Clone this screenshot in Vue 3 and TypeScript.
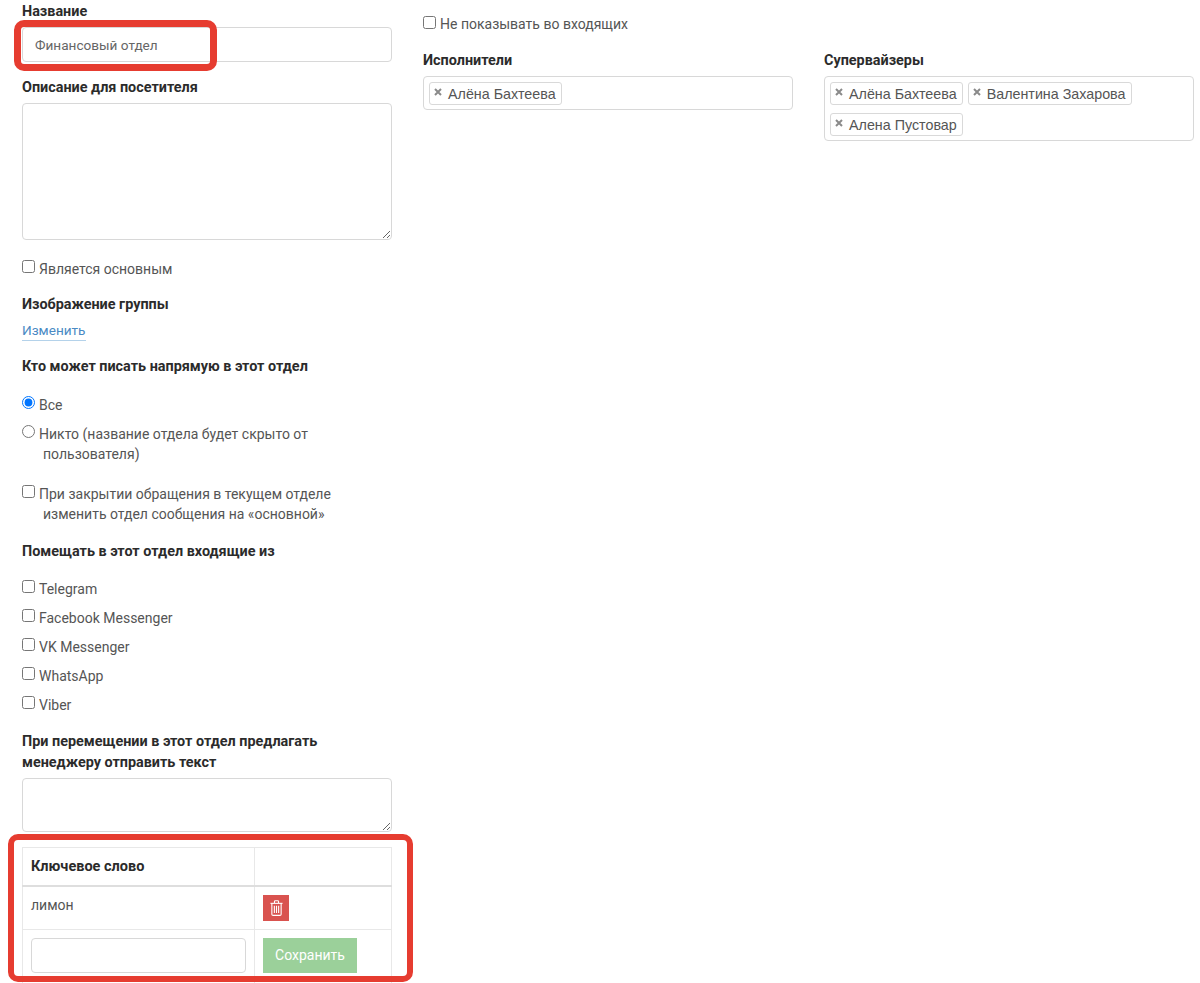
<script setup lang="ts">
interface Tag { name: string }
const performers: Tag[] = [{ name: 'Алёна Бахтеева' }]
const supervisors: Tag[] = [
  { name: 'Алёна Бахтеева' },
  { name: 'Валентина Захарова' },
  { name: 'Алена Пустовар' },
]
const sources: string[] = ['Telegram', 'Facebook Messenger', 'VK Messenger', 'WhatsApp', 'Viber']
</script>

<template>
  <div class="page">
    <section class="col col-left">
      <label class="head first">Название</label>
      <input class="field name-field" type="text" value="Финансовый отдел" />
      <label class="head desc-head">Описание для посетителя</label>
      <textarea class="field desc-area"></textarea>
      <label class="check main-check"><input type="checkbox" /><span>Является основным</span></label>
      <div class="head image-head">Изображение группы</div>
      <a class="change-link" href="#">Изменить</a>
      <div class="head who-head">Кто может писать напрямую в этот отдел</div>
      <label class="check all-radio"><input type="radio" name="who" checked /><span>Все</span></label>
      <label class="check none-radio"><input type="radio" name="who" /><span>Никто (название отдела будет скрыто от<br /><i class="hang">пользователя)</i></span></label>
      <label class="check close-check"><input type="checkbox" /><span>При закрытии обращения в текущем отделе<br /><i class="hang">изменить отдел сообщения на «основной»</i></span></label>
      <div class="head put-head">Помещать в этот отдел входящие из</div>
      <div class="sources">
        <label v-for="s in sources" :key="s" class="check source"><input type="checkbox" /><span>{{ s }}</span></label>
      </div>
      <div class="head move-head">При перемещении в этот отдел предлагать<br />менеджеру отправить текст</div>
      <textarea class="field move-area"></textarea>
      <table class="keywords">
        <thead>
          <tr><th>Ключевое слово</th><th></th></tr>
        </thead>
        <tbody>
          <tr class="word-row">
            <td class="word">лимон</td>
            <td>
              <button class="trash" type="button" aria-label="Удалить">
                <svg width="13" height="16" viewBox="0 0 14 17" fill="none" stroke="#fff" stroke-width="1.2">
                  <path d="M0.5 3.5h13" />
                  <path d="M4.8 3.2V1.6q0-.9.9-.9h2.6q.9 0 .9.9v1.6" />
                  <path d="M2 3.5v11.6q0 1.3 1.3 1.3h7.4q1.3 0 1.3-1.3V3.5" />
                  <path d="M4.7 6v8M7 6v8M9.3 6v8" />
                </svg>
              </button>
            </td>
          </tr>
          <tr class="add-row">
            <td><input class="field word-input" type="text" /></td>
            <td><button class="save" type="button">Сохранить</button></td>
          </tr>
        </tbody>
      </table>
    </section>

    <section class="col col-mid">
      <label class="check hide-check"><input type="checkbox" /><span>Не показывать во входящих</span></label>
      <div class="head tag-head">Исполнители</div>
      <div class="tags">
        <span v-for="t in performers" :key="t.name" class="tag">
          <svg class="x" width="8" height="8" viewBox="0 0 8 8"><path d="M1 1l6 6M7 1L1 7" stroke="#8a8a8a" stroke-width="2" /></svg>
          {{ t.name }}
        </span>
      </div>
    </section>

    <section class="col col-right">
      <div class="head tag-head right-head">Супервайзеры</div>
      <div class="tags">
        <span v-for="t in supervisors" :key="t.name" class="tag">
          <svg class="x" width="8" height="8" viewBox="0 0 8 8"><path d="M1 1l6 6M7 1L1 7" stroke="#8a8a8a" stroke-width="2" /></svg>
          {{ t.name }}
        </span>
      </div>
    </section>

    <div class="mark mark-name"></div>
    <div class="mark mark-table"></div>
  </div>
</template>

<style>
html, body { margin: 0; background: #fff; overflow: hidden; }
</style>

<style scoped>
.page {
  position: relative;
  width: 1200px;
  height: 983px;
  overflow: hidden;
  box-sizing: border-box;
  padding-left: 22px;
  display: grid;
  grid-template-columns: 370px 370px 370px;
  column-gap: 31px;
  align-items: start;
  font-family: Roboto, "Noto Sans", sans-serif;
  font-size: 14px;
  line-height: 20px;
  color: #555;
}
.col { display: flex; flex-direction: column; align-items: flex-start; min-width: 0; }
.head { display: block; font-weight: 700; font-size: 14.4px; line-height: 21px; color: #2b2b2b; }
.first { margin-top: 1px; }
.field {
  display: block;
  box-sizing: border-box;
  width: 370px;
  border: 1px solid #d8d8d8;
  border-radius: 4px;
  background: #fff;
  font: inherit;
  color: #666;
  outline: none;
}
.name-field { height: 35px; margin-top: 5px; padding: 0 12px; font-size: 13.6px; }
.desc-head { margin-top: 15px; }
.desc-area { height: 137px; margin-top: 5px; }
.check { display: flex; align-items: flex-start; }
.check input { flex: none; width: 13px; height: 13px; margin: 0 4px 0 0; }
.check span { margin-top: -1px; }
.hang { font-style: normal; margin-left: 4px; }
.main-check { margin-top: 20px; }
.image-head { margin-top: 15px; }
.change-link {
  margin-top: 6px;
  color: #4a8ac4;
  font-size: 13.6px;
  text-decoration: none;
  border-bottom: 1px solid #b4d2ea;
  line-height: 19px;
}
.who-head { margin-top: 15px; }
.all-radio { margin-top: 19px; }
.none-radio { margin-top: 10px; }
.close-check { margin-top: 21px; }
.put-head { margin-top: 17px; }
.sources { display: flex; flex-direction: column; gap: 10px; margin-top: 18px; }
.move-head { margin-top: 16px; }
.move-area { height: 54px; margin-top: 5px; }
.keywords {
  width: 370px;
  margin-top: 15px;
  border-collapse: collapse;
  table-layout: fixed;
  color: #555;
}
.keywords th, .keywords td {
  box-sizing: border-box;
  border: 1px solid #e8e8e8;
  padding: 8px;
  text-align: left;
  vertical-align: top;
}
.keywords th:first-child { width: 232px; }
.keywords th {
  height: 38px;
  padding: 2px 8px 0;
  vertical-align: middle;
  font-size: 14.5px;
  font-weight: 700;
  color: #2b2b2b;
  border-bottom-width: 2px;
  border-bottom-color: #dedede;
}
.word-row td { height: 43px; }
.add-row td { height: 60px; }
.word-input { width: 215px; height: 35px; }
.trash {
  display: flex;
  align-items: center;
  justify-content: center;
  width: 26px;
  height: 26px;
  padding: 0;
  border: 0;
  background: #d9534f;
}
.save {
  display: block;
  width: 94px;
  height: 35px;
  padding: 0;
  border: 0;
  background: #9bd09a;
  color: #fff;
  font: inherit;
  font-size: 14px;
}
.hide-check { margin-top: 15px; }
.hide-check input { margin-top: 1px; }
.tag-head { margin-top: 16px; }
.right-head { margin-top: 50px; }
.tags {
  box-sizing: border-box;
  width: 370px;
  margin-top: 5px;
  padding: 5px 6px 4px 5px;
  display: flex;
  flex-wrap: wrap;
  gap: 8px 5px;
  border: 1px solid #d8d8d8;
  border-radius: 4px;
}
.tag {
  box-sizing: border-box;
  display: inline-flex;
  align-items: center;
  height: 23px;
  padding: 0 5px 0 4px;
  border: 1px solid #d9d9d9;
  border-radius: 3px;
  font-family: "Liberation Sans", Arial, sans-serif;
  font-size: 14.3px;
}
.x { margin: -3px 6px 0 0; flex: none; }
.mark { position: absolute; box-sizing: border-box; border: 6px solid #e63c30; pointer-events: none; }
.mark-name { left: 14px; top: 20px; width: 203px; height: 51px; border-width: 7px; border-radius: 10px; }
.mark-table { left: 8px; top: 834px; width: 405px; height: 148px; border-radius: 10px; }
</style>
